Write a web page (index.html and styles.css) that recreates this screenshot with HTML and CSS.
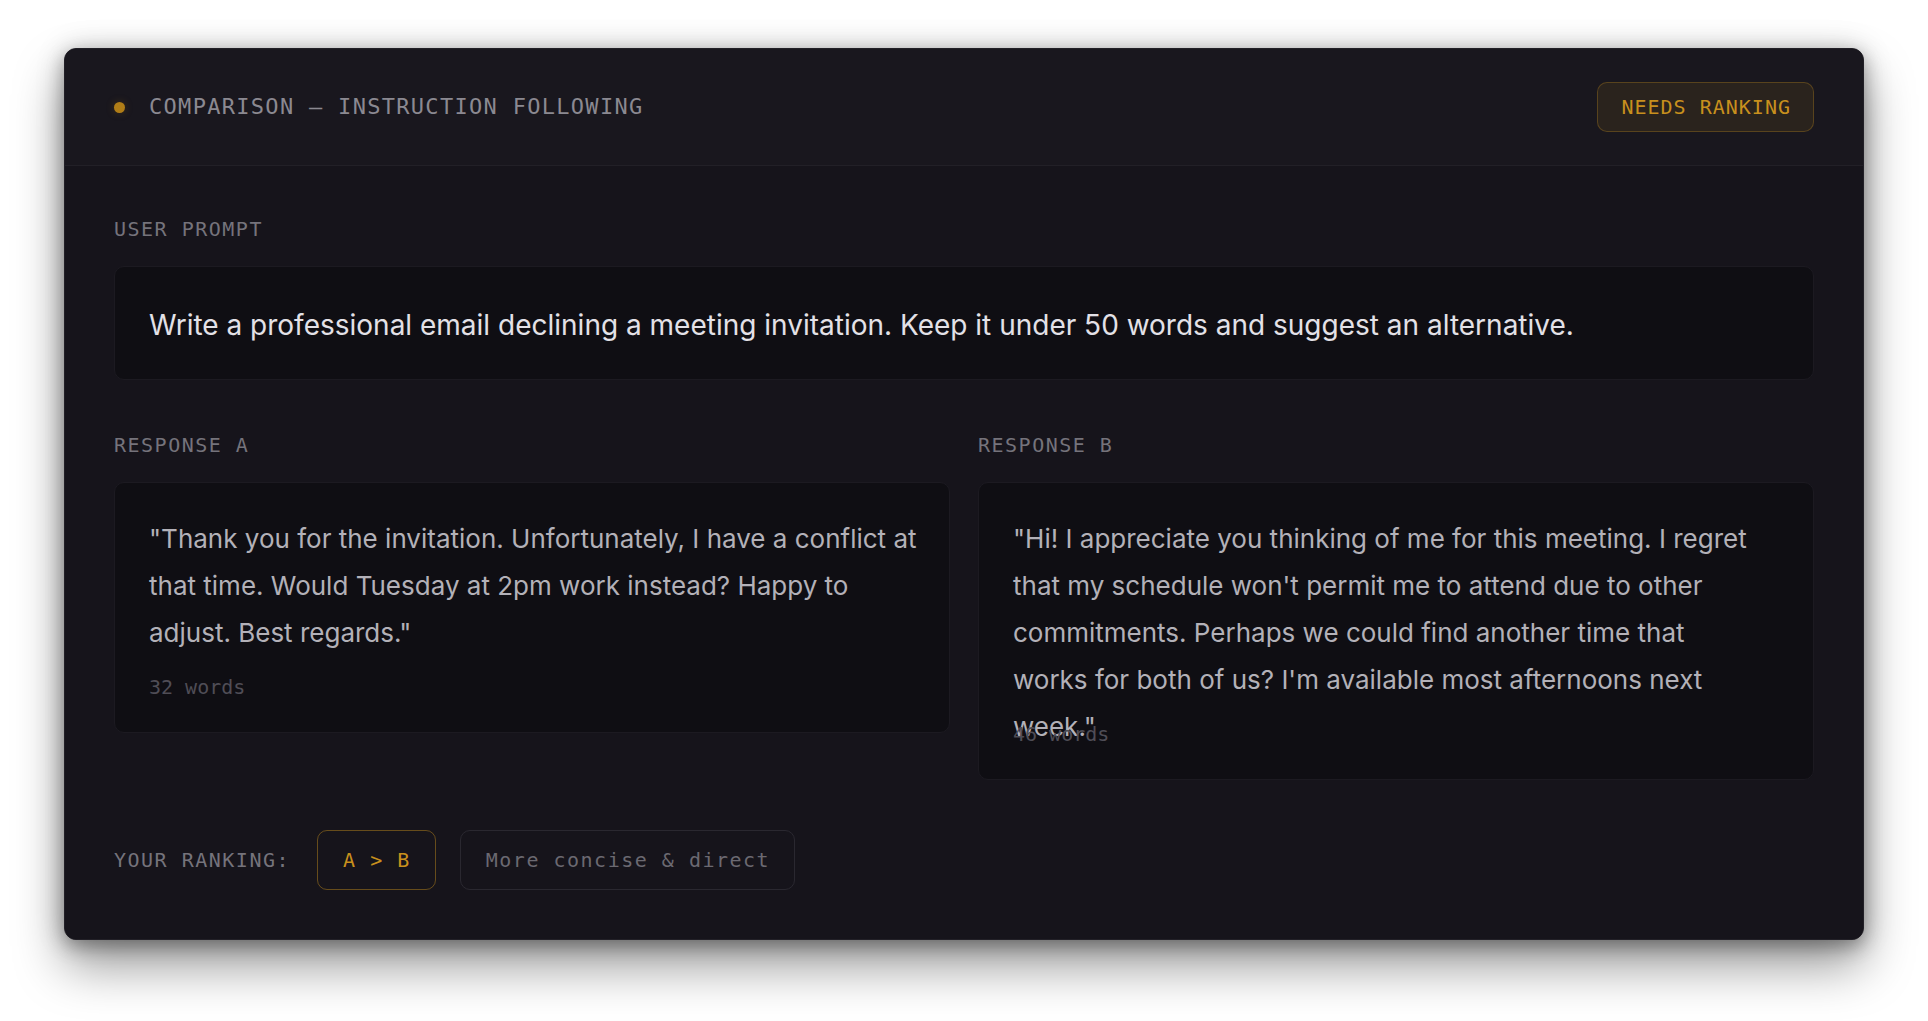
FILE: index.html
```html
<!DOCTYPE html>
<html lang="en">
<head>
<meta charset="utf-8">
<title>Comparison — Instruction Following</title>
<link rel="stylesheet" href="styles.css">
</head>
<body>
<div class="card">
  <header class="card-header">
    <div class="title">
      <span class="dot"></span>
      <span class="title-text">COMPARISON — INSTRUCTION FOLLOWING</span>
    </div>
    <span class="badge">NEEDS RANKING</span>
  </header>
  <main class="card-body">
    <section class="prompt-section">
      <div class="label">USER PROMPT</div>
      <div class="prompt-box">Write a professional email declining a meeting invitation. Keep it under 50 words and suggest an alternative.</div>
    </section>
    <section class="responses">
      <div class="response">
        <div class="label">RESPONSE A</div>
        <div class="response-box">
          <p class="response-text">"Thank you for the invitation. Unfortunately, I have a conflict at that time. Would Tuesday at 2pm work instead? Happy to adjust. Best regards."</p>
          <div class="word-count">32 words</div>
        </div>
      </div>
      <div class="response">
        <div class="label">RESPONSE B</div>
        <div class="response-box">
          <p class="response-text response-text--long">"Hi! I appreciate you thinking of me for this meeting. I regret that my schedule won't permit me to attend due to other commitments. Perhaps we could find another time that works for both of us? I'm available most afternoons next week."</p>
          <div class="word-count">46 words</div>
        </div>
      </div>
    </section>
    <section class="ranking">
      <span class="label ranking-label">YOUR RANKING:</span>
      <span class="rank-btn rank-choice">A &gt; B</span>
      <span class="rank-btn rank-reason">More concise &amp; direct</span>
    </section>
  </main>
</div>
</body>
</html>
```

FILE: styles.css
```css
* { box-sizing: border-box; }

html, body {
  margin: 0;
  background: #ffffff;
}

body {
  min-height: 100vh;
  padding: 48px 64px;
  font-family: Inter, "Noto Sans", sans-serif;
}

.card {
  width: 1800px;
  background: #17151c;
  border-radius: 12px;
  border: 1px solid #222027;
  box-shadow: 0 26px 50px rgba(0, 0, 0, 0.4), 0 6px 18px rgba(0, 0, 0, 0.28), 0 0 30px rgba(0, 0, 0, 0.16);
  overflow: hidden;
}

.card-header {
  height: 117px;
  display: flex;
  align-items: center;
  justify-content: space-between;
  padding: 0 49px;
  background: #19171e;
  border-bottom: 1px solid #222027;
}

.title {
  display: flex;
  align-items: center;
  gap: 24px;
}

.dot {
  width: 11px;
  height: 11px;
  border-radius: 50%;
  background: #b07d17;
  box-shadow: 0 0 8px rgba(176, 125, 23, 0.25);
}

.title-text {
  font-family: "DejaVu Sans Mono", monospace;
  font-size: 22px;
  letter-spacing: 1.3px;
  color: #8b8991;
  line-height: 24px;
}

.badge {
  font-family: "DejaVu Sans Mono", monospace;
  font-size: 20px;
  letter-spacing: 1px;
  line-height: 22px;
  padding: 13px 22px 13px 23px;
  color: #c8901d;
  background: rgba(200, 144, 29, 0.1);
  border: 1px solid rgba(200, 144, 29, 0.3);
  border-radius: 10px;
}

.card-body {
  padding: 51px 49px 49px;
  background: #16141b;
}

.label {
  font-family: "DejaVu Sans Mono", monospace;
  font-size: 20px;
  letter-spacing: 1.5px;
  line-height: 24px;
  color: #75737b;
}

.prompt-section .label,
.response .label {
  margin-bottom: 25px;
}

.prompt-box {
  background: #0f0e13;
  border: 1px solid #1c1a21;
  border-radius: 10px;
  padding: 35px 34px 31px;
  font-size: 28px;
  line-height: 46px;
  color: #e3e1e7;
}

.responses {
  margin-top: 53px;
  display: grid;
  grid-template-columns: 1fr 1fr;
  gap: 28px;
  align-items: start;
}

.response-box {
  background: #0f0e13;
  border: 1px solid #1c1a21;
  border-radius: 10px;
  padding: 32px 27px 33px 34px;
}

.response-text {
  margin: 0;
  font-size: 26px;
  line-height: 47px;
  color: #b3b1b8;
  max-height: 188px;
}

.response-text--long {
  padding-right: 30px;
}

.word-count {
  margin-top: 19px;
  font-family: "DejaVu Sans Mono", monospace;
  font-size: 20px;
  line-height: 24px;
  color: #4f4d56;
}

.ranking {
  margin-top: 50px;
  display: flex;
  align-items: center;
  gap: 24px;
}

.ranking-label {
  margin-right: 3px;
}

.rank-btn {
  font-family: "DejaVu Sans Mono", monospace;
  font-size: 20px;
  letter-spacing: 1.5px;
  line-height: 24px;
  padding: 17px 24px 17px 25px;
  border-radius: 10px;
  border: 1px solid #2a2830;
}

.rank-choice {
  color: #c8901d;
  border-color: rgba(200, 144, 29, 0.45);
}

.rank-reason {
  color: #6b6971;
}
```
